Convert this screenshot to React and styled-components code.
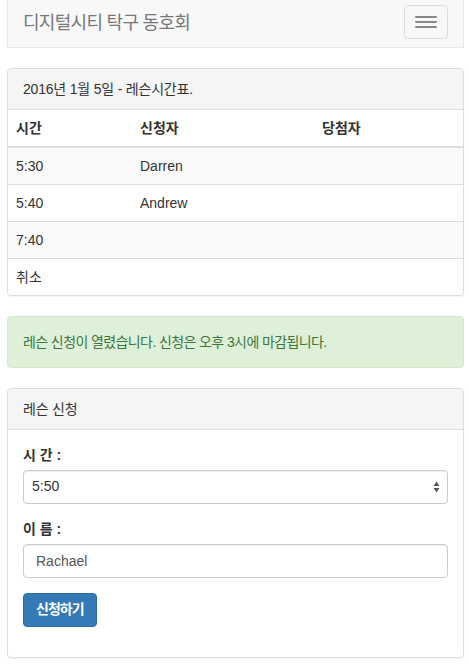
import React from "react";
import styled, { createGlobalStyle } from "styled-components";

const GlobalStyle = createGlobalStyle`
  * { box-sizing: border-box; }
  html, body { margin: 0; padding: 0; background: #fff; }
  body {
    font-family: "Liberation Sans", "Noto Sans CJK KR", Arial, sans-serif;
    font-size: 14px;
    line-height: 1.42857;
    color: #333;
  }
`;

const Page = styled.div`
  padding: 0 4px 0 7px;
`;

const Navbar = styled.nav`
  height: 48px;
  background: #f8f8f8;
  border: 1px solid #e7e7e7;
  border-top: none;
  display: flex;
  align-items: flex-start;
  justify-content: space-between;
  padding: 0 15px;
  margin-bottom: 20px;
`;

const Brand = styled.a`
  font-size: 18px;
  line-height: 20px;
  color: #777;
  padding-top: 13px;
  letter-spacing: -0.7px;
  text-decoration: none;
`;

const Toggle = styled.button`
  margin-top: 5px;
  width: 44px;
  height: 34px;
  padding: 9px 10px;
  background: transparent;
  border: 1px solid #ddd;
  border-radius: 4px;
  display: flex;
  flex-direction: column;
  justify-content: center;
  gap: 3px;
`;

const IconBar = styled.span`
  display: block;
  width: 22px;
  height: 2px;
  border-radius: 1px;
  background: #888;
`;

const Panel = styled.section`
  border: 1px solid #ddd;
  border-radius: 4px;
  background: #fff;
  box-shadow: 0 1px 1px rgba(0, 0, 0, 0.05);
  margin-bottom: 20px;
  overflow: hidden;
`;

const PanelHeading = styled.div`
  background: #f5f5f5;
  border-bottom: 1px solid #ddd;
  padding: 10px 15px;
  color: #333;
  line-height: 20px;
  letter-spacing: -0.2px;
`;

const Table = styled.table`
  width: 100%;
  border-collapse: collapse;
  border-spacing: 0;
`;

const Th = styled.th`
  text-align: left;
  font-weight: bold;
  padding: 8px;
  line-height: 20px;
  border-bottom: 2px solid #ddd;
  width: ${(p) => p.$w || "auto"};
`;

const Tr = styled.tr`
  background: ${(p) => (p.$striped ? "#f9f9f9" : "#fff")};
`;

const Td = styled.td`
  padding: 8px;
  line-height: 20px;
  border-top: 1px solid #ddd;
`;

const Alert = styled.div`
  background: #dff0d8;
  border: 1px solid #d6e9c6;
  color: #3c763d;
  border-radius: 4px;
  padding: 15px;
  line-height: 20px;
  letter-spacing: -0.6px;
  margin-bottom: 20px;
`;

const PanelBody = styled.div`
  padding: 15px;
`;

const FormGroup = styled.div`
  margin-bottom: 15px;
`;

const Label = styled.label`
  display: block;
  font-weight: bold;
  margin-bottom: 5px;
  line-height: 20px;
`;

const SelectWrap = styled.div`
  position: relative;
`;

const Select = styled.select`
  appearance: none;
  -webkit-appearance: none;
  display: block;
  width: 100%;
  height: 34px;
  padding: 6px 24px 6px 8px;
  font: inherit;
  font-size: 14px;
  color: #333;
  background: #fff;
  border: 1px solid #ccc;
  border-radius: 4px;
  box-shadow: inset 0 1px 1px rgba(0, 0, 0, 0.075);
`;

const Arrows = styled.svg`
  position: absolute;
  right: 8px;
  top: 11px;
  pointer-events: none;
`;

const Input = styled.input`
  display: block;
  width: 100%;
  height: 34px;
  padding: 6px 12px;
  font: inherit;
  font-size: 14px;
  color: #555;
  background: #fff;
  border: 1px solid #ccc;
  border-radius: 4px;
  box-shadow: inset 0 1px 1px rgba(0, 0, 0, 0.075);
`;

const Button = styled.button`
  height: 34px;
  padding: 6px 12px;
  font: inherit;
  font-weight: bold;
  font-size: 14px;
  letter-spacing: -1px;
  color: #fff;
  background: #337ab7;
  border: 1px solid #2e6da4;
  border-radius: 4px;
`;

const rows = [
  { time: "5:30", name: "Darren", winner: "" },
  { time: "5:40", name: "Andrew", winner: "" },
  { time: "7:40", name: "", winner: "" },
  { time: "취소", name: "", winner: "" },
];

export default function App() {
  return (
    <>
      <GlobalStyle />
      <Page>
        <Navbar>
          <Brand href="#">디지털시티 탁구 동호회</Brand>
          <Toggle aria-label="menu">
            <IconBar />
            <IconBar />
            <IconBar />
          </Toggle>
        </Navbar>

        <Panel>
          <PanelHeading>2016년 1월 5일 - 레슨시간표.</PanelHeading>
          <Table>
            <thead>
              <tr>
                <Th $w="124px">시간</Th>
                <Th $w="182px">신청자</Th>
                <Th>당첨자</Th>
              </tr>
            </thead>
            <tbody>
              {rows.map((r, i) => (
                <Tr key={i} $striped={i % 2 === 0}>
                  <Td>{r.time}</Td>
                  <Td>{r.name}</Td>
                  <Td>{r.winner}</Td>
                </Tr>
              ))}
            </tbody>
          </Table>
        </Panel>

        <Alert>레슨 신청이 열렸습니다. 신청은 오후 3시에 마감됩니다.</Alert>

        <Panel>
          <PanelHeading>레슨 신청</PanelHeading>
          <PanelBody>
            <FormGroup>
              <Label>시 간 :</Label>
              <SelectWrap>
                <Select defaultValue="5:50">
                  <option>5:50</option>
                  <option>6:00</option>
                </Select>
                <Arrows width="7" height="12" viewBox="0 0 7 12">
                  <path d="M3.5 0.5 L6.5 5 L0.5 5 Z" fill="#555" />
                  <path d="M0.5 7 L6.5 7 L3.5 11.5 Z" fill="#555" />
                </Arrows>
              </SelectWrap>
            </FormGroup>
            <FormGroup>
              <Label>이 름 :</Label>
              <Input defaultValue="Rachael" />
            </FormGroup>
            <FormGroup>
              <Button>신청하기</Button>
            </FormGroup>
          </PanelBody>
        </Panel>
      </Page>
    </>
  );
}
